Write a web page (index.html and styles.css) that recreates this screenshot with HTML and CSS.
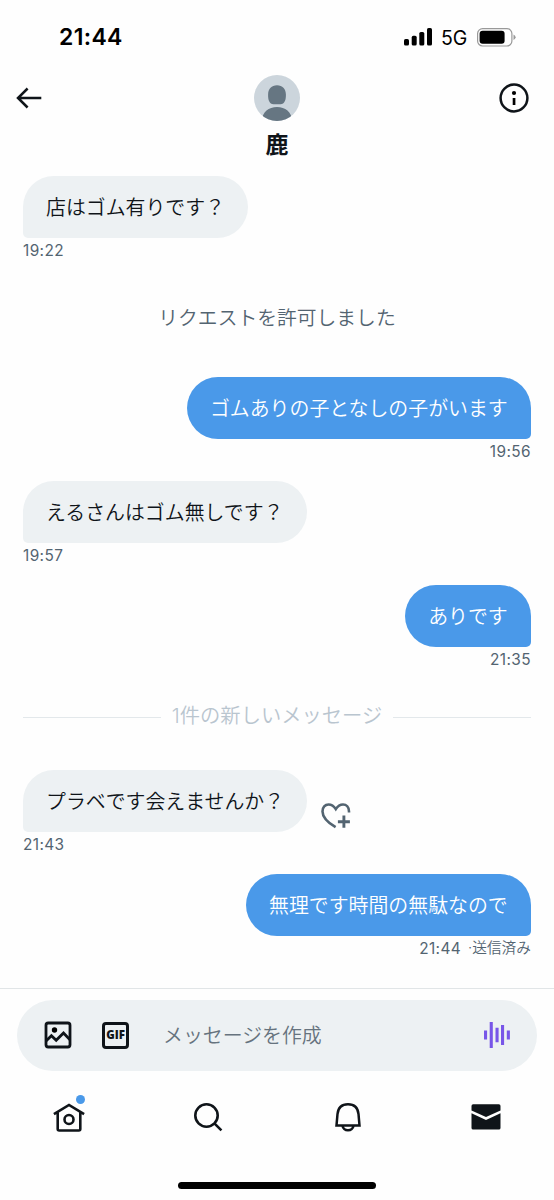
FILE: index.html
```
<!DOCTYPE html>
<html lang="ja">
<head>
<meta charset="utf-8">
<title>メッセージ</title>
<link rel="stylesheet" href="styles.css">
</head>
<body>
<div class="screen">
  <div class="status">
    <span class="clock">21:44</span>
    <div class="status-right">
      <svg width="28" height="18" viewBox="0 0 28 18"><rect x="0" y="11" width="5" height="6.5" rx="1.6"/><rect x="7.7" y="7.8" width="5" height="9.7" rx="1.6"/><rect x="15.3" y="4" width="5" height="13.5" rx="1.6"/><rect x="23" y="0" width="5" height="17.5" rx="1.6"/></svg>
      <span class="network">5G</span>
      <svg width="39" height="19" viewBox="0 0 39 19"><rect x=".6" y=".6" width="34.3" height="17.4" rx="5" fill="none" stroke="#999" stroke-width="1.2"/><rect x="2.6" y="2.8" width="25" height="13" rx="3"/><path d="M36.5 6.6q2.1 1 2.1 2.7t-2.1 2.7z" fill="#999"/></svg>
    </div>
  </div>

  <header class="header">
    <svg class="back" width="26" height="22" viewBox="0 0 26 22"><path d="M11.6 1.5 2 11l9.6 9.5M2 11h23.3" fill="none" stroke="#0f1419" stroke-width="2.5"/></svg>
    <div class="contact">
      <svg width="46" height="46" viewBox="0 0 46 46"><defs><clipPath id="avatar"><circle cx="23" cy="23" r="23"/></clipPath></defs><g clip-path="url(#avatar)"><rect width="46" height="46" fill="#ccd5dc"/><path d="M23 10.300c-5.500 0-8.700 3.500-8.900 9-.2 5.700 1.300 9.900 5.400 9.900h7c4.100 0 5.600-4.200 5.400-9.900-.2-5.500-3.400-9-8.900-9zM7.500 46c1-9 7.200-13.900 15.500-13.900S37.500 37 38.500 46z" fill="#667682"/></g></svg>
      <span class="name">鹿</span>
    </div>
    <svg class="info" width="30" height="30" viewBox="0 0 30 30"><circle cx="15" cy="15" r="13.4" fill="none" stroke="#0f1419" stroke-width="2.5"/><circle cx="15" cy="10" r="2.1"/><path d="M13.700 15h2.700v7h-2.700z"/></svg>
  </header>

  <main class="thread">
    <div class="message received"><div class="bubble">店はゴム有りです？</div><div class="meta">19:22</div></div>
    <div class="notice">リクエストを許可しました</div>
    <div class="message sent"><div class="bubble">ゴムありの子となしの子がいます</div><div class="meta">19:56</div></div>
    <div class="message received"><div class="bubble">えるさんはゴム無しです？</div><div class="meta">19:57</div></div>
    <div class="message sent"><div class="bubble">ありです</div><div class="meta">21:35</div></div>
    <div class="divider"><span>1件の新しいメッセージ</span></div>
    <div class="message received">
      <div class="bubble-row"><div class="bubble">プラベです会えませんか？</div>
        <svg width="30" height="26" viewBox="0 0 30 26"><path d="M14.6 24.200C6.500 19.300 1.500 14.400 1.500 8.400c0-4 2.600-6.900 6-6.900 3 0 5.400 1.600 7.300 4.600 1.900-3 4.300-4.600 7.200-4.600 3.400 0 6 2.900 6 6.900v1.200" fill="none" stroke="#536471" stroke-width="2.600"/><path d="M22.900 12.500v12.300M16.900 18.700h12" fill="none" stroke="#536471" stroke-width="2.900"/></svg>
      </div>
      <div class="meta">21:43</div>
    </div>
    <div class="message sent"><div class="bubble">無理です時間の無駄なので</div><div class="meta"><span>21:44</span><span class="delivery">·送信済み</span></div></div>
  </main>

  <footer class="footer">
    <div class="composer">
      <svg class="photo" width="28" height="28" viewBox="0 0 28 28"><rect x="2" y="2" width="24" height="24" rx="2.200" fill="none" stroke="#0f1419" stroke-width="2.800"/><circle cx="10.500" cy="9" r="2.700"/><path d="M2 20l5.400-5.300 4.800 4.600L19.500 12l6.500 6.700" fill="none" stroke="#0f1419" stroke-width="2.800"/></svg>
      <div class="gif">GIF</div>
      <span class="placeholder">メッセージを作成</span>
      <svg class="voice" width="26" height="26" viewBox="0 0 26 26" fill="#7856e8"><path d="M0 8.500h3.100v9H0zM5.700 0h3.100v26H5.700zM11.500 5.700h3.100v14.500h-3.100zM17 2.900h3.100v20.200H17zM22.800 8.500h3.100v9h-3.100z"/></svg>
    </div>
    <nav class="tabs">
      <div class="tab home"><svg width="32" height="30" viewBox="0 0 32 30" fill="none" stroke="#0f1419" stroke-width="2.600"><path d="M.9 12.200 16 3l15.100 9.200M4.700 10v17q0 1.500 1.500 1.500h19.600q1.500 0 1.500-1.500V10"/><circle cx="16" cy="17.500" r="4.500"/></svg><i class="dot"></i></div>
      <div class="tab"><svg width="30" height="30" viewBox="0 0 30 30" fill="none" stroke="#0f1419" stroke-width="2.600"><circle cx="13.500" cy="13.500" r="11.200"/><path d="m21.400 21.400 7 7"/></svg></div>
      <div class="tab bell"><svg width="28" height="30" viewBox="0 0 28 30" fill="none" stroke="#0f1419" stroke-width="2.500"><path d="M2.500 23.400 3.500 12C4.100 5.500 8 2.200 14 2.200S23.900 5.500 24.500 12l1 11.400zM8.300 23.500c.8 3.200 3 4.800 5.700 4.800s4.900-1.600 5.700-4.800"/></svg></div>
      <div class="tab"><svg width="30" height="26" viewBox="0 0 30 26" fill="#0f1419"><path d="M.5 6.500V2Q.5.300 2.200.300h25.600q1.700 0 1.700 1.700v4.500L15 13z"/><path d="M.5 9.300 15 16l14.500-6.700v14.600q0 1.700-1.700 1.700H2.200q-1.700 0-1.700-1.700z"/></svg></div>
    </nav>
    <div class="home-indicator"></div>
  </footer>
</div>
</body>
</html>
```
FILE: styles.css
```
* { box-sizing: border-box; }
body { margin: 0; background: #fff; color: #0f1419; font-family: Inter, "Noto Sans CJK JP", sans-serif; }
svg { display: block; flex: none; }
.screen { width: 554px; height: 1200px; display: flex; flex-direction: column; overflow: hidden; background: #fefefe; }
.status { height: 74px; padding: 0 38px 0 59px; display: flex; align-items: center; justify-content: space-between; color: #000; }
.clock { font-size: 23px; font-weight: 600; letter-spacing: .35px; }
.status-right { display: flex; align-items: center; }
.network { width: 27px; margin: 1px 9px 0 9px; font-size: 19.5px; font-weight: 400; letter-spacing: -.2px; white-space: nowrap; }
.header { height: 102px; padding: 1px 25px 0 16px; display: grid; grid-template-columns: 238px 46px 1fr; align-items: start; }
.back { margin-top: 12px; }
.contact { display: flex; flex-direction: column; align-items: center; }
.name { margin-top: 7px; font-size: 23px; line-height: 35px; font-weight: 700; }
.info { margin-top: 8px; justify-self: end; }
.thread { height: 812px; padding: 0 23px; display: flex; flex-direction: column; }
.message { height: 104px; display: flex; flex-direction: column; align-items: flex-start; }
.sent { align-items: flex-end; }
.bubble { height: 62px; padding: 0 23.300px; border-radius: 31px 31px 31px 5px; background: #edf1f3; font: 350 19.900px/61px "Noto Sans CJK JP", sans-serif; white-space: nowrap; }
.received .bubble { padding-left: 23px; padding-right: 23.300px; }
.sent .bubble { border-radius: 31px 31px 5px 31px; background: #4a99e9; color: #fff; }
.bubble-row { display: flex; align-items: center; gap: 14px; }
.bubble-row svg { margin-top: 29px; }
.meta { display: flex; font-size: 15.400px; line-height: 25px; color: #536471; letter-spacing: .4px; }
.sent .meta { line-height: 26px; }
.sent .delivery { margin-left: 7px; font-size: 14.700px; font-weight: 350; line-height: 25px; letter-spacing: 0; }
.notice { height: 97px; text-align: center; font: 350 19.800px/73px "Noto Sans CJK JP", sans-serif; color: #536471; }
.divider { height: 81px; padding-bottom: 25px; display: flex; align-items: center; gap: 11px; font: 350 20.300px/28px Inter, "Noto Sans CJK JP", sans-serif; color: #b9c5cf; white-space: nowrap; }
.divider span { margin-top: -2px; }
.divider::before, .divider::after { content: ""; height: 1px; flex: 1; background: #e3e8eb; }
.footer { height: 212px; border-top: 1px solid #e1e5e7; padding-top: 11px; }
.composer { height: 71px; margin: 0 17px; padding: 0 27px 1px; border-radius: 36px; display: flex; align-items: center; background: #edf1f3; }
.gif { width: 27px; height: 27px; margin-left: 30px; border: 3px solid #0f1419; border-radius: 4px; display: flex; align-items: center; justify-content: center; font: 800 11.500px/1 "Open Sans", sans-serif; }
.placeholder { margin-left: 34px; flex: 1; font: 350 19.900px/28px "Noto Sans CJK JP", sans-serif; color: #66737e; }
.tabs { height: 91px; width: 555px; display: grid; grid-template-columns: repeat(4, 1fr); }
.tab { display: flex; align-items: center; justify-content: center; position: relative; }
.bell { padding-left: 2px; }
.dot { position: absolute; top: 24px; left: 76px; width: 9px; height: 9px; border-radius: 50%; background: #4a99e9; }
.home-indicator { width: 198px; height: 7px; margin: 20px auto 0; border-radius: 4px; background: #000; }
```
